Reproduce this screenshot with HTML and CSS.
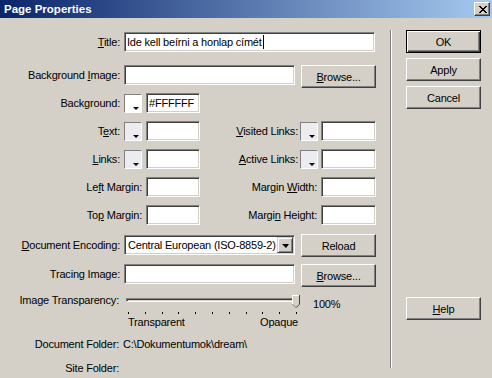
FILE: index.html
```html
<!DOCTYPE html>
<html lang="hu">
<head>
<meta charset="utf-8">
<title>Page Properties</title>
<link rel="stylesheet" href="styles.css">
</head>
<body>
<div class="window">
  <div class="titlebar">
    <span class="title">Page Properties</span>
    <span class="close"><svg width="8" height="7" viewBox="0 0 8 7" shape-rendering="crispEdges"><path fill="#000" d="M0 0h2v1h-2z M6 0h2v1h-2z M1 1h2v1h-2z M5 1h2v1h-2z M2 2h4v1h-4z M3 3h2v1h-2z M2 4h4v1h-4z M1 5h2v1h-2z M5 5h2v1h-2z M0 6h2v1h-2z M6 6h2v1h-2z"/></svg></span>
  </div>
  <div class="content">
    <div class="main">
      <div class="row">
        <span class="lbl"><u>T</u>itle:</span>
        <div class="field f-title"><span>Ide kell beírni a honlap címét</span><span class="caret"></span></div>
      </div>
      <div class="row top r-bgimg">
        <span class="lbl">Background <u>I</u>mage:</span>
        <div class="field f-wide"></div>
        <span class="btn"><span><u>B</u>rowse...</span></span>
      </div>
      <div class="grid">
        <span class="lbl c1">Background:</span>
        <span class="swatch white"></span>
        <div class="field">#FFFFFF</div>

        <span class="lbl c1">T<u>e</u>xt:</span>
        <span class="swatch"></span>
        <div class="field"></div>
        <span class="lbl2"><u>V</u>isited Links:</span>
        <span class="swatch"></span>
        <div class="field"></div>

        <span class="lbl c1"><u>L</u>inks:</span>
        <span class="swatch"></span>
        <div class="field"></div>
        <span class="lbl2"><u>A</u>ctive Links:</span>
        <span class="swatch"></span>
        <div class="field"></div>

        <span class="lbl c1 span2">Le<u>f</u>t Margin:</span>
        <div class="field"></div>
        <span class="lbl2 span2">Margin <u>W</u>idth:</span>
        <div class="field"></div>

        <span class="lbl c1 span2">To<u>p</u> Margin:</span>
        <div class="field"></div>
        <span class="lbl2 span2">Margi<u>n</u> Height:</span>
        <div class="field"></div>
      </div>
      <div class="row top r-enc">
        <span class="lbl"><u>D</u>ocument Encoding:</span>
        <div class="field select"><span>Central European (ISO-8859-2)</span><span class="drop"><i></i></span></div>
        <span class="btn">Reload</span>
      </div>
      <div class="row top r-trace">
        <span class="lbl">Tracing Image:</span>
        <div class="field f-wide"></div>
        <span class="btn"><span><u>B</u>rowse...</span></span>
      </div>
      <div class="row r-slider">
        <span class="lbl">Image Transparency:</span>
        <div class="slider">
          <div class="track"></div>
          <svg class="thumb" width="8" height="13" viewBox="0 0 8 13">
            <path d="M0 0H8V9L4 13L0 9Z" fill="#D4D0C8"/>
            <path d="M0.5 9V0.5H7" stroke="#fff" fill="none"/>
            <path d="M7.5 0V9.2L4 12.7" stroke="#404040" fill="none"/>
            <path d="M0.5 9.2L4 12.7" stroke="#808080" fill="none"/>
          </svg>
        </div>
        <span class="pct">100%</span>
      </div>
      <div class="ticks"><i></i><i></i><i></i><i></i><i></i><i></i><i></i><i></i><i></i><i></i><i></i></div>
      <div class="tick-labels"><span>Transparent</span><span>Opaque</span></div>
      <div class="row info r-doc">
        <span class="lbl">Document Folder:</span>
        <span>C:\Dokumentumok\dream\</span>
      </div>
      <div class="row info r-site">
        <span class="lbl">Site Folder:</span>
      </div>
    </div>
    <div class="sep"></div>
    <div class="side">
      <span class="btn btn-default">OK</span>
      <span class="btn">Apply</span>
      <span class="btn">Cancel</span>
      <span class="btn help"><span><u>H</u>elp</span></span>
    </div>
  </div>
</div>
</body>
</html>
```

FILE: styles.css
```css
* { box-sizing: border-box; }
html, body { margin: 0; padding: 0; }
body {
  width: 492px;
  height: 378px;
  overflow: hidden;
  background: #D4D0C8;
  font-family: "Liberation Sans", Arial, sans-serif;
  font-size: 11px;
  letter-spacing: -0.2px;
  color: #000;
}
u { text-decoration: underline; text-underline-offset: 1px; }

.window { width: 492px; height: 378px; display: flex; flex-direction: column; }

.titlebar {
  flex: none;
  height: 18px;
  display: flex;
  align-items: center;
  justify-content: space-between;
  padding: 0 2px 0 4px;
  background: linear-gradient(to right, #0A246A, #A6CAF0);
}
.title { color: #fff; font-weight: bold; font-size: 11.5px; letter-spacing: 0; line-height: 18px; }
.close {
  width: 16px;
  height: 14px;
  display: flex;
  align-items: center;
  justify-content: center;
  padding-left: 1px;
  background: #D4D0C8;
  border: 1px solid;
  border-color: #fff #404040 #404040 #fff;
  box-shadow: inset -1px -1px #808080;
}

.content { flex: 1; display: flex; }
.main { flex: none; width: 390px; padding-top: 14px; display: flex; flex-direction: column; }
.sep {
  flex: none;
  width: 2px;
  height: 338px;
  margin-top: 12px;
  border-left: 1px solid #808080;
  border-right: 1px solid #fff;
}
.side { flex: none; padding: 12px 0 0 14px; display: flex; flex-direction: column; gap: 5px; }
.help { margin-top: 183px; }

.row { display: flex; align-items: center; }
.row.top { align-items: flex-start; }
.lbl { flex: none; width: 124px; padding-right: 4px; text-align: right; white-space: nowrap; line-height: 20px; }

.field {
  height: 20px;
  background: #fff;
  border: 1px solid;
  border-color: #808080 #fff #fff #808080;
  box-shadow: inset 1px 1px #404040, inset -1px -1px #D4D0C8;
  padding: 0 2px;
  display: flex;
  align-items: center;
  white-space: nowrap;
  overflow: hidden;
}
.f-title { width: 251px; }
.f-wide { width: 171px; }
.caret { width: 1px; height: 14px; background: #000; margin-left: 1px; }

.btn {
  flex: none;
  width: 75px;
  height: 23px;
  display: flex;
  align-items: center;
  justify-content: center;
  background: #D4D0C8;
  border: 1px solid;
  border-color: #fff #404040 #404040 #fff;
  box-shadow: inset -1px -1px #808080;
}
.btn-default {
  border-color: #000;
  box-shadow: inset 1px 1px #fff, inset -1px -1px #404040, inset -2px -2px #808080;
}
.row .btn { margin-left: 6px; }

.r-bgimg { margin-top: 13px; }

.grid {
  display: grid;
  grid-template-columns: 124px 22px 54px 100px 21px 55px;
  grid-auto-rows: 20px;
  row-gap: 8px;
  align-items: center;
  margin-top: 5px;
}
.grid .lbl { width: auto; }
.c1 { grid-column-start: 1; }
.span2 { grid-column-end: span 2; }
.lbl2 { text-align: right; padding-right: 2px; white-space: nowrap; }
.lbl2.span2 { padding-right: 4px; }
.grid .field { width: 100%; }

.swatch {
  position: relative;
  width: 18px;
  height: 19px;
  background: #ECECF0;
  border: 1px solid;
  border-color: #808080 #fff #fff #808080;
}
.swatch.white { background: #fff; }
.swatch::after {
  content: "";
  position: absolute;
  right: 2px;
  bottom: 2px;
  border-left: 3px solid transparent;
  border-right: 3px solid transparent;
  border-top: 3px solid #000;
}

.r-enc { margin-top: 9px; }
.r-enc .lbl, .r-enc .select { margin-top: 1px; }
.select { width: 171px; padding: 0 1px 0 3px; justify-content: space-between; }
.drop {
  flex: none;
  width: 16px;
  height: 16px;
  display: flex;
  align-items: center;
  justify-content: center;
  background: #D4D0C8;
  border: 1px solid;
  border-color: #D4D0C8 #404040 #404040 #D4D0C8;
  box-shadow: inset 1px 1px #fff, inset -1px -1px #808080;
}
.drop i {
  width: 0;
  height: 0;
  border-left: 4px solid transparent;
  border-right: 3px solid transparent;
  border-top: 4px solid #000;
  margin-top: 1px;
}

.r-trace { margin-top: 7px; }

.r-slider { margin-top: 6px; align-items: flex-start; }
.r-slider .lbl { line-height: 14px; padding-right: 5px; }
.slider { position: relative; flex: none; width: 176px; height: 14px; }
.track {
  width: 171px;
  height: 4px;
  margin: 5px 0 0 2px;
  border: 1px solid;
  border-color: #808080 #fff #fff #808080;
  box-shadow: inset 1px 1px #404040, inset -1px -1px #D4D0C8;
}
.thumb { position: absolute; left: 168px; top: 2px; }
.pct { margin-left: 13px; padding-top: 4px; line-height: 14px; }

.ticks {
  display: flex;
  justify-content: space-between;
  width: 169px;
  height: 2px;
  margin: 1px 0 0 128px;
}
.ticks i { width: 1px; height: 2px; background: #000; }
.tick-labels {
  display: flex;
  justify-content: space-between;
  width: 170px;
  margin: 1px 0 0 128px;
  line-height: 14px;
}

.info .lbl { width: 123px; line-height: 14px; }
.r-doc { margin-top: 8px; line-height: 14px; }
.r-site { margin-top: 10px; line-height: 14px; }
```
